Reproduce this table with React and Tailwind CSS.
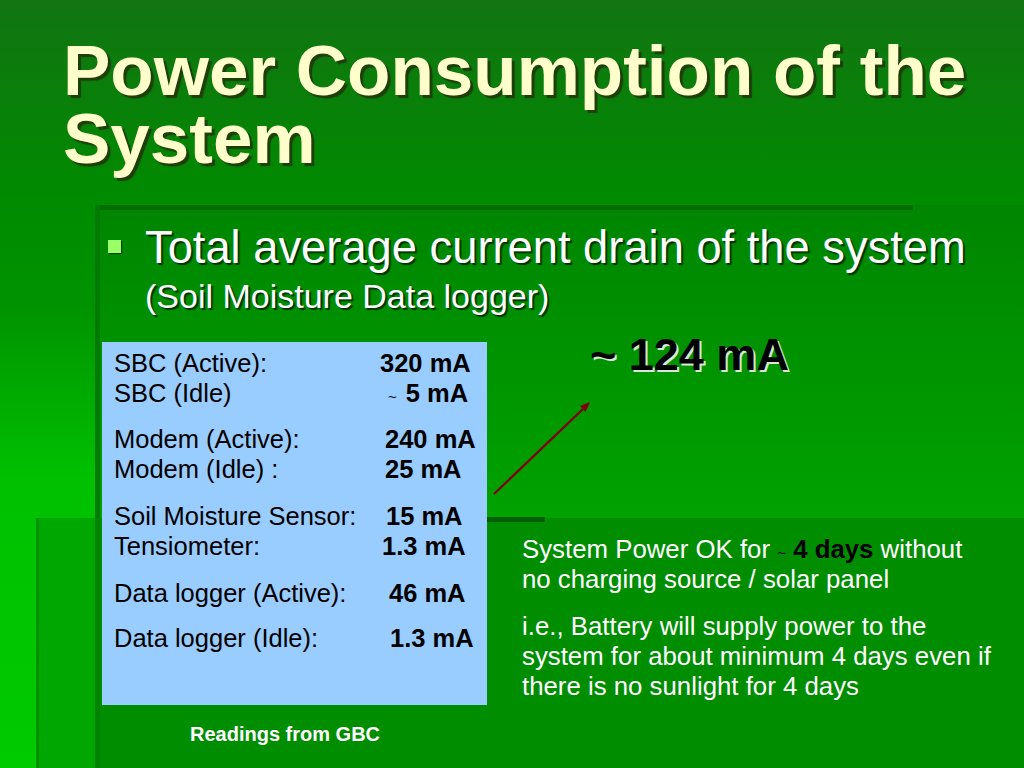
import React from 'react';

const rows = [
  { label: 'SBC (Active):', value: '320 mA', col: 'w-[266px]', gap: '' },
  { label: 'SBC (Idle)', value: '5 mA', tilde: true, col: 'w-[274px]', gap: '' },
  { label: 'Modem (Active):', value: '240 mA', col: 'w-[271px]', gap: 'mt-[16px]' },
  { label: 'Modem (Idle) :', value: '25 mA', col: 'w-[271px]', gap: '' },
  { label: 'Soil Moisture Sensor:', value: '15 mA', col: 'w-[272px]', gap: 'mt-[17px]' },
  { label: 'Tensiometer:', value: '1.3 mA', col: 'w-[268px]', gap: '' },
  { label: 'Data logger (Active):', value: '46 mA', col: 'w-[275px]', gap: 'mt-[17px]' },
  { label: 'Data logger (Idle):', value: '1.3 mA', col: 'w-[276px]', gap: 'mt-[15px]' },
];

const Background = () => (
  <div className="col-start-1 row-start-1 flex flex-col h-[768px]">
    <div className="h-[205px]" />
    <div className="flex h-[313px]">
      <div className="w-[95px]" />
      <div className="flex-1 border-l-[5px] border-[#007a00] bg-[linear-gradient(to_bottom,#008500,#00a200)]">
        <div className="h-[5px] w-[813px] bg-[#006d00]" />
      </div>
    </div>
    <div className="flex flex-1">
      <div className="w-[36px]" />
      <div className="w-[59px] border-l-[3px] border-[#009200] bg-[#00a700]" />
      <div className="w-[5px] bg-[#008300]" />
      <div className="flex-1 bg-[#008d00]">
        <div className="ml-[387px] h-[5px] w-[58px] bg-[#006000] -mt-[1px]" />
      </div>
    </div>
  </div>
);

const Arrow = () => (
  <svg width="110" height="105" viewBox="0 0 110 105" className="mt-[15px] block">
    <line x1="7" y1="99" x2="96" y2="14" stroke="#800000" strokeWidth="2.2" />
    <polygon points="103,7 98.6,16.8 93,11" fill="#800000" />
  </svg>
);

const App = () => {
  return (
    <div className="w-[1024px] h-[768px] overflow-hidden grid font-['Liberation_Sans',Arial,sans-serif] bg-[linear-gradient(to_bottom,#127412_0%,#008b00_26%,#009300_40%,#00c000_62%,#00ca00_100%)]">
      <Background />

      <div className="col-start-1 row-start-1 flex flex-col">
        <h1 className="pl-[63px] pt-[37px] text-[71px] leading-[68px] font-bold text-[#ffffcc] [text-shadow:3px_3px_1px_#1f3f0a]">
          Power Consumption of the
          <br />
          System
        </h1>

        <div className="flex pl-[108px] mt-[49px]">
          <div className="w-[13px] h-[13px] mt-[18px] bg-[#99ff66] shadow-[1px_1px_1px_#004000]" />
          <p className="ml-[24px] text-[45.3px] leading-[52px] text-white whitespace-nowrap [text-shadow:2px_2px_1px_#003300]">
            Total average current drain of the system
          </p>
        </div>
        <p className="pl-[145px] text-[34px] leading-[45px] text-white whitespace-nowrap [text-shadow:2px_2px_1px_#003300]">
          (Soil Moisture Data logger)
        </p>

        <div className="flex">
          <div className="w-[487px] flex flex-col">
            <div className="ml-[102px] mt-[23px] w-[385px] h-[363px] bg-[#99ccff] pt-[6px] pl-[12px] text-black text-[25.5px] leading-[30px]">
              {rows.map((r) => (
                <div key={r.label} className={`flex whitespace-nowrap ${r.gap}`}>
                  <span className={`shrink-0 ${r.col}`}>{r.label}</span>
                  {r.tilde ? (
                    <span className="font-bold">
                      <span className="text-[15px] leading-none font-normal">~</span>
                      <span className="ml-[9px]">{r.value}</span>
                    </span>
                  ) : (
                    <span className="font-bold">{r.value}</span>
                  )}
                </div>
              ))}
            </div>
            <p className="pl-[190px] mt-[17px] text-[20px] leading-[24px] font-bold text-white">
              Readings from GBC
            </p>
          </div>

          <div className="flex-1 flex flex-col">
            <p className="pl-[103px] mt-[11px] text-[45px] leading-[50px] font-bold text-black whitespace-nowrap [text-shadow:2px_2px_0_#d8e8d8]">
              ~ 124 mA
            </p>
            <Arrow />
            <div className="pl-[35px] mt-[34px] text-[25.8px] leading-[30px] text-white whitespace-nowrap">
              <p>
                System Power OK for{' '}
                <span className="text-[15px] leading-none text-black">~</span>{' '}
                <span className="font-bold text-black">4 days</span> without
                <br />
                no charging source / solar panel
              </p>
              <p className="mt-[17px]">
                i.e., Battery will supply power to the
                <br />
                system for about minimum 4 days even if
                <br />
                there is no sunlight for 4 days
              </p>
            </div>
          </div>
        </div>
      </div>
    </div>
  );
};

export default App;
